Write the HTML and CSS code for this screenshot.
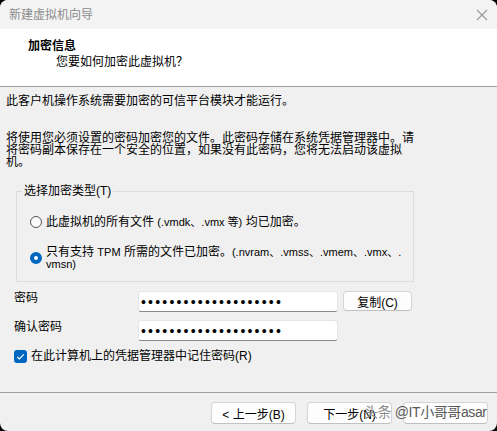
FILE: index.html
```html
<!DOCTYPE html>
<html lang="zh-CN">
<head>
    <meta charset="UTF-8">
    <title>新建虚拟机向导</title>
    <link rel="stylesheet" href="styles.css">
</head>
<body>
    <div class="window">
        <!-- Title bar -->
        <div class="titlebar">
            <span class="title">新建虚拟机向导</span>
            <svg class="close" width="12" height="12" viewBox="0 0 12 12">
                <path d="M1 1 L11 11 M11 1 L1 11" stroke="#9a9a9a" stroke-width="1.1" fill="none"/>
            </svg>
        </div>

        <!-- Page header -->
        <div class="header">
            <div class="header-title">加密信息</div>
            <div class="header-sub">您要如何加密此虚拟机？</div>
        </div>

        <div class="content">
            <p class="intro">此客户机操作系统需要加密的可信平台模块才能运行。</p>
            <p class="note">将使用您必须设置的密码加密您的文件。此密码存储在系统凭据管理器中。请将密码副本保存在一个安全的位置，如果没有此密码，您将无法启动该虚拟机。</p>

            <fieldset class="group">
                <legend>选择加密类型(T)</legend>
                <div class="options">
                    <label class="option">
                        <span class="radio"></span>
                        <span class="option-text">此虚拟机的所有文件 <span class="latin">(.vmdk、.vmx 等)</span> 均已加密。</span>
                    </label>
                    <label class="option two-line">
                        <span class="radio checked"></span>
                        <span class="option-text">只有支持 <span class="latin">TPM</span> 所需的文件已加密。<span class="latin">(.nvram、.vmss、.vmem、.vmx、.<br>vmsn)</span></span>
                    </label>
                </div>
            </fieldset>

            <div class="form">
                <label class="field-label" for="pw">密码</label>
                <input class="field" id="pw" type="password" value="abcdefghijklmnopqrst">
                <button class="btn copy-btn">复制(C)</button>

                <label class="field-label" for="pw2">确认密码</label>
                <input class="field" id="pw2" type="password" value="abcdefghijklmnopqrst">
            </div>

            <label class="remember">
                <span class="checkbox">
                    <svg width="13" height="13" viewBox="0 0 13 13">
                        <path d="M3.2 6.8 L5.4 9 L9.8 4.4" stroke="#fff" stroke-width="1.2" fill="none"/>
                    </svg>
                </span>
                在此计算机上的凭据管理器中记住密码(R)
            </label>
        </div>

        <!-- Wizard buttons -->
        <div class="footer">
            <button class="btn nav-btn">&lt; 上一步(B)</button>
            <button class="btn nav-btn">下一步(N)</button>
            <button class="btn nav-btn"></button>
            <span class="mark"><span class="mark-app">头条</span> @IT小哥哥asar</span>
        </div>
    </div>
</body>
</html>
```

FILE: styles.css
```css
html, body {
    margin: 0;
    background-color: #000;
}
body {
    font-family: "Liberation Sans", "Noto Sans CJK SC", sans-serif;
    font-size: 12px;
    color: #000;
}
.window {
    width: 497px;
    height: 431px;
    border-radius: 8px;
    overflow: hidden;
    background-color: #f0f0f0;
    display: flex;
    flex-direction: column;
}
.titlebar {
    height: 29px;
    flex-shrink: 0;
    display: flex;
    align-items: center;
    justify-content: space-between;
    padding: 0 9px;
    background-color: #f3f3f3;
}
.title {
    color: #8c8c8c;
    font-size: 12px;
    line-height: 14px;
}
.header {
    height: 47px;
    padding-top: 10px;
    background-color: #fff;
    border-bottom: 1px solid #a0a0a0;
    flex-shrink: 0;
}
.header-title {
    font-weight: bold;
    line-height: 14px;
    padding-left: 28px;
}
.header-sub {
    line-height: 14px;
    margin-top: 2px;
    padding-left: 56px;
}
.content {
    padding: 0 6px;
}
.intro {
    margin: 7px 0 0;
    line-height: 14px;
}
.note {
    margin: 24px 0 0;
    line-height: 12px;
    width: 412px;
}
.group {
    margin: 16px 0 0 10px;
    width: 398px;
    padding: 0 0 11px 5px;
    border: 1px solid #dcdcdc;
    box-sizing: border-box;
}
.group legend {
    padding: 0 2px;
    line-height: 14px;
}
.options {
    padding: 17px 0 0 8px;
    display: flex;
    flex-direction: column;
    gap: 17px;
}
.option {
    display: flex;
    align-items: center;
    gap: 4px;
    line-height: 14px;
}
.option.two-line {
    line-height: 12px;
}
.latin {
    font-size: 11px;
}
.radio {
    width: 10px;
    height: 10px;
    border: 1px solid #555;
    border-radius: 50%;
    flex-shrink: 0;
    background-color: #fafafa;
}
.radio.checked {
    width: 4px;
    height: 4px;
    border: 4px solid #0067c0;
    background-color: #fff;
}
.form {
    margin: 9px 0 0 8px;
    display: grid;
    grid-template-columns: 119px 200px 69px;
    column-gap: 5px;
    row-gap: 8px;
}
.field-label {
    line-height: 14px;
}
.field {
    height: 21px;
    box-sizing: border-box;
    border: 1px solid #e6e6e6;
    border-bottom-color: #8a8a8a;
    border-radius: 3px;
    background-color: #fff;
    padding: 0 2px;
    font-family: "Liberation Sans", sans-serif;
    font-size: 14px;
    letter-spacing: 2.2px;
    color: #000;
    outline: none;
}
.btn {
    font-family: "Liberation Sans", "Noto Sans CJK SC", sans-serif;
    font-size: 12px;
    color: #000;
    background-color: #fdfdfd;
    border: 1px solid #d4d4d4;
    border-bottom-color: #c0c0c0;
    border-radius: 4px;
    padding: 0;
}
.copy-btn {
    height: 20px;
}
.remember {
    margin: 8px 0 0 8px;
    display: flex;
    align-items: center;
    gap: 4px;
    line-height: 14px;
}
.checkbox {
    width: 13px;
    height: 13px;
    border-radius: 3px;
    background-color: #0067c0;
    display: flex;
}
.footer {
    margin-top: auto;
    border-top: 1px solid #a0a0a0;
    padding: 9px 9px 7px 0;
    display: flex;
    justify-content: flex-end;
    gap: 11px;
    position: relative;
}
.nav-btn {
    width: 85px;
    height: 22px;
}
/* watermark stamped over the last button */
.mark {
    position: absolute;
    left: 364px;
    top: 11px;
    font-size: 14px;
    line-height: 16px;
    color: #5a5a5a;
    white-space: nowrap;
    letter-spacing: -0.4px;
}
.mark-app {
    color: #8a8a8a;
}
```
